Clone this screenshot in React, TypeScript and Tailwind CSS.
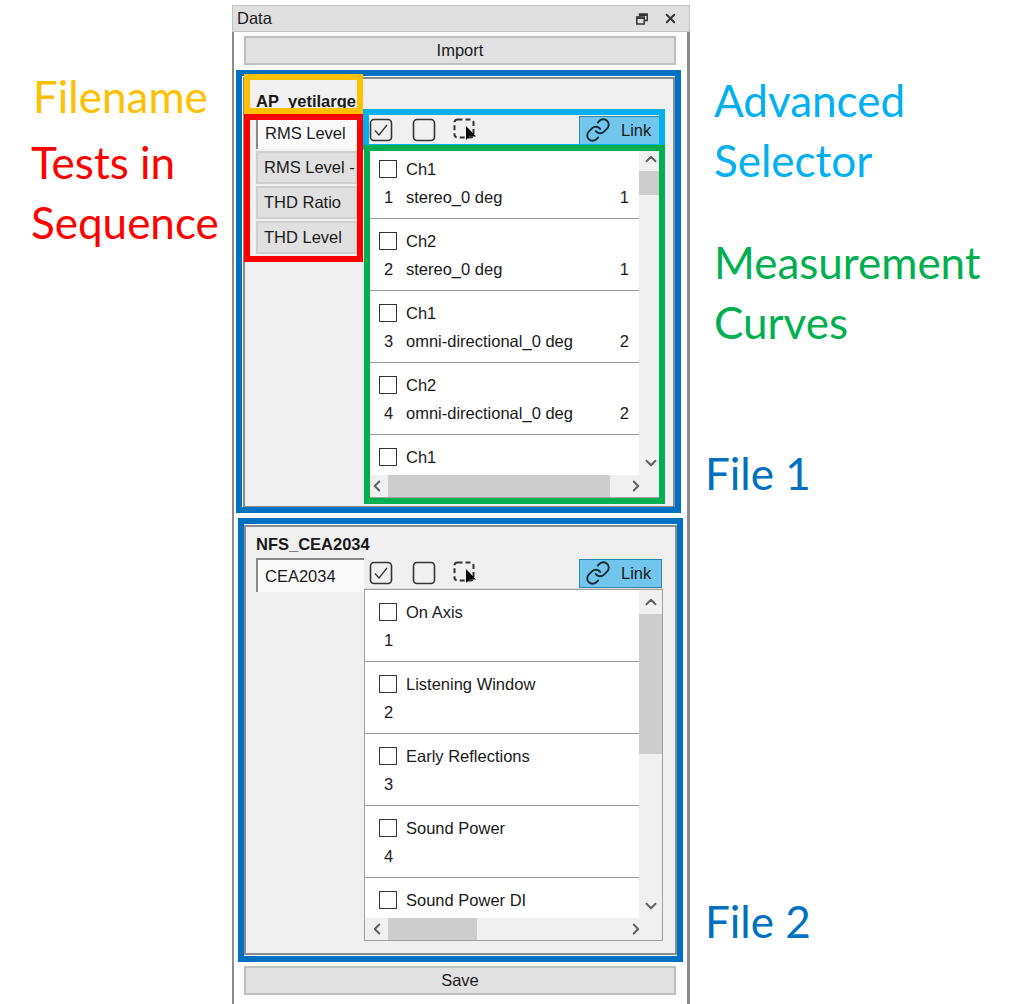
import React from 'react';
import { ChevronUp, ChevronDown, ChevronLeft, ChevronRight, Link as LinkIcon, X } from 'lucide-react';

interface Curve {
  label: string;
  index: number;
  name?: string;
  group?: number;
}

const file1Curves: Curve[] = [
  { label: 'Ch1', index: 1, name: 'stereo_0 deg', group: 1 },
  { label: 'Ch2', index: 2, name: 'stereo_0 deg', group: 1 },
  { label: 'Ch1', index: 3, name: 'omni-directional_0 deg', group: 2 },
  { label: 'Ch2', index: 4, name: 'omni-directional_0 deg', group: 2 },
  { label: 'Ch1', index: 5, name: 'omni-directional_0 deg', group: 2 },
];

const file2Curves: Curve[] = [
  { label: 'On Axis', index: 1 },
  { label: 'Listening Window', index: 2 },
  { label: 'Early Reflections', index: 3 },
  { label: 'Sound Power', index: 4 },
  { label: 'Sound Power DI', index: 5 },
];

const CheckAllIcon = () => (
  <svg width="24" height="24" viewBox="0 0 24 24" fill="none" stroke="#333" strokeWidth="1.6">
    <rect x="1.5" y="1.5" width="21" height="21" rx="3.5" />
    <path d="M6 12.5l4 4.5 8-10" strokeWidth="1.3" />
  </svg>
);

const CheckNoneIcon = () => (
  <svg width="24" height="24" viewBox="0 0 24 24" fill="none" stroke="#333" strokeWidth="1.6">
    <rect x="1.5" y="1.5" width="21" height="21" rx="3.5" />
  </svg>
);

const CheckPickIcon = () => (
  <svg width="26" height="24" viewBox="0 0 26 24" fill="none">
    <rect x="1.5" y="1.5" width="19" height="18" rx="3" stroke="#333" strokeWidth="2" strokeDasharray="5 3" />
    <path d="M13 8l0 14 3.6-3.4 6.4 0z" fill="#000" />
  </svg>
);

const RestoreIcon = () => (
  <svg width="12" height="12" viewBox="0 0 12 12" fill="none" stroke="#333" strokeWidth="1.5">
    <rect x="0.8" y="4" width="7.4" height="7" />
    <path d="M0.8 5.2h7.4M3.6 4V1h7.6v6.6H8.2M3.6 2.2h7.6" />
  </svg>
);

const CurveRow: React.FC<{ curve: Curve }> = ({ curve }) => (
  <div className="h-[72px] shrink-0 border-b border-[#9c9c9c] pt-[13px]">
    <div className="flex h-[18px] items-center pl-[14px]">
      <span className="h-[18px] w-[18px] border border-[#333] bg-white"></span>
      <span className="ml-[9px]">{curve.label}</span>
    </div>
    <div className="mt-[9px] flex h-[20px] items-center pl-[19px] pr-[10px]">
      <span className="w-[22px]">{curve.index}</span>
      <span>{curve.name}</span>
      <span className="ml-auto">{curve.group}</span>
    </div>
  </div>
);

const CurveList: React.FC<{ curves: Curve[]; vThumb: string; hThumb: string }> = ({ curves, vThumb, hThumb }) => (
  <div className="flex h-[352px] w-[299px] flex-col border border-[#a0a0a0] bg-[#f0f0f0]">
    <div className="flex min-h-0 flex-1">
      <div className="flex flex-1 flex-col overflow-hidden bg-white">
        {curves.map((curve) => (
          <CurveRow key={curve.index} curve={curve} />
        ))}
      </div>
      <div className="flex w-[23px] shrink-0 flex-col items-center">
        <div className="flex h-[24px] shrink-0 items-center">
          <ChevronUp size={18} strokeWidth={2.6} color="#606060" />
        </div>
        <div className={`w-full shrink-0 bg-[#cdcdcd] ${vThumb}`}></div>
        <div className="mt-auto flex h-[24px] shrink-0 items-center">
          <ChevronDown size={18} strokeWidth={2.6} color="#606060" />
        </div>
      </div>
    </div>
    <div className="flex h-[22px] shrink-0">
      <div className="flex w-[23px] shrink-0 items-center justify-center">
        <ChevronLeft size={18} strokeWidth={2.6} color="#606060" />
      </div>
      <div className={`shrink-0 bg-[#cdcdcd] ${hThumb}`}></div>
      <div className="ml-auto flex w-[50px] shrink-0 items-center justify-center pr-[2px]">
        <ChevronRight size={18} strokeWidth={2.6} color="#606060" />
      </div>
    </div>
  </div>
);

const Toolbar = () => (
  <div className="flex h-[31px] w-[299px] items-center border-b border-[#dcdcdc] bg-[#f0f0f0]">
    <div className="ml-[5px] flex w-[43px]"><CheckAllIcon /></div>
    <div className="flex w-[41px]"><CheckNoneIcon /></div>
    <div className="flex"><CheckPickIcon /></div>
    <div className="ml-auto mr-[1px] flex h-[29px] w-[83px] items-center border border-[#2f86ad] bg-[#72c5ec] pl-[5px]">
      <LinkIcon size={26} strokeWidth={1.7} color="#1a2a33" />
      <span className="ml-[10px]">Link</span>
    </div>
  </div>
);

export default function App() {
  return (
    <div className="relative h-[1004px] w-[1031px] overflow-hidden bg-white font-['Liberation_Sans',sans-serif] text-[16.5px] text-[#1a1a1a]">
      {/* Dock window */}
      <div className="ml-[232px] flex h-[1004px] w-[458px] flex-col pt-[5px]">
        <div className="flex h-[27px] shrink-0 items-center border border-[#c4c4c4] bg-[#dfdfdf] pl-[4px] pr-[11px]">
          <span>Data</span>
          <span className="ml-auto flex items-center gap-[15px]">
            <RestoreIcon />
            <X size={15} strokeWidth={3} color="#333" />
          </span>
        </div>
        <div className="flex flex-1 flex-col border-l-2 border-r-[3px] border-[#8c8c8c] bg-white">
          <div className="ml-[10px] mr-[11px] mt-[4px] flex h-[29px] shrink-0 items-center justify-center border-2 border-[#c0c0c0] bg-[#e1e1e1]">
            Import
          </div>

          {/* File 1 */}
          <div className="ml-[9px] mt-[12px] h-[431px] w-[432px] shrink-0 border-2 border-[#8c8c8c] bg-[#f0f0f0]">
            <div className="ml-[11px] flex h-[36px] items-end pb-[1px] font-bold">AP_yetilarge</div>
            <div className="ml-[11px] flex">
              <div className="flex w-[108px] shrink-0 flex-col pt-[2px]">
                <div className="flex h-[32px] items-center border-l-2 border-[#888] bg-[#fafafa] pl-[7px]">RMS Level</div>
                <div className="mt-[2px] flex h-[33px] w-[102px] items-center overflow-hidden whitespace-nowrap border-2 border-[#cfcfcf] bg-[#e0e0e0] pl-[6px]">RMS Level - 1</div>
                <div className="mt-[2px] flex h-[33px] w-[102px] items-center border-2 border-[#cfcfcf] bg-[#e0e0e0] pl-[6px]">THD Ratio</div>
                <div className="mt-[2px] flex h-[33px] w-[102px] items-center border-2 border-[#cfcfcf] bg-[#e0e0e0] pl-[6px]">THD Level</div>
              </div>
              <div className="flex flex-col">
                <Toolbar />
                <CurveList curves={file1Curves} vThumb="h-[24px]" hThumb="w-[222px]" />
              </div>
            </div>
          </div>

          {/* File 2 */}
          <div className="ml-[10px] mt-[17px] h-[430px] w-[433px] shrink-0 border-2 border-[#8c8c8c] bg-[#f0f0f0]">
            <div className="ml-[10px] flex h-[31px] items-end pb-[1px] font-bold">NFS_CEA2034</div>
            <div className="ml-[10px] flex">
              <div className="w-[108px] shrink-0">
                <div className="flex h-[34px] items-center border-l-2 border-t-2 border-[#888] bg-[#fafafa] pl-[7px]">CEA2034</div>
              </div>
              <div className="flex flex-col">
                <Toolbar />
                <CurveList curves={file2Curves} vThumb="h-[140px]" hThumb="w-[89px]" />
              </div>
            </div>
          </div>

          <div className="ml-[10px] mr-[11px] mt-[11px] flex h-[29px] shrink-0 items-center justify-center border-2 border-[#c0c0c0] bg-[#e1e1e1]">
            Save
          </div>
        </div>
      </div>

      {/* Callout frames drawn over the window */}
      <div className="absolute left-[236px] top-[70px] h-[443px] w-[445px] border-[6px] border-[#0070c0]"></div>
      <div className="absolute left-[238px] top-[518px] h-[444px] w-[445px] border-[6px] border-[#0070c0]"></div>
      <div className="absolute left-[244px] top-[74px] h-[40px] w-[119px] border-[6px] border-[#ffc000]"></div>
      <div className="absolute left-[244px] top-[114px] h-[148px] w-[119px] border-[6px] border-[#ff0000]"></div>
      <div className="absolute left-[363px] top-[109px] h-[41px] w-[302px] border-[6px] border-[#00b0f0]"></div>
      <div className="absolute left-[364px] top-[145px] h-[359px] w-[301px] border-[6px] border-[#00b050]"></div>

      {/* Callout labels */}
      <div className="absolute left-[33px] top-[66px] font-['Lato',sans-serif] text-[44px] leading-[60px] text-[#ffc000]">Filename</div>
      <div className="absolute left-[31px] top-[132px] font-['Lato',sans-serif] text-[44px] leading-[60px] text-[#ff0000]">
        Tests in<br />Sequence
      </div>
      <div className="absolute left-[714px] top-[70px] font-['Lato',sans-serif] text-[44px] leading-[60px] text-[#00b0f0]">
        Advanced<br />Selector
      </div>
      <div className="absolute left-[714px] top-[232px] font-['Lato',sans-serif] text-[44px] leading-[60px] text-[#00b050]">
        Measurement<br />Curves
      </div>
      <div className="absolute left-[705px] top-[443px] font-['Lato',sans-serif] text-[44px] leading-[60px] text-[#0070c0]">File 1</div>
      <div className="absolute left-[705px] top-[891px] font-['Lato',sans-serif] text-[44px] leading-[60px] text-[#0070c0]">File 2</div>
    </div>
  );
}
